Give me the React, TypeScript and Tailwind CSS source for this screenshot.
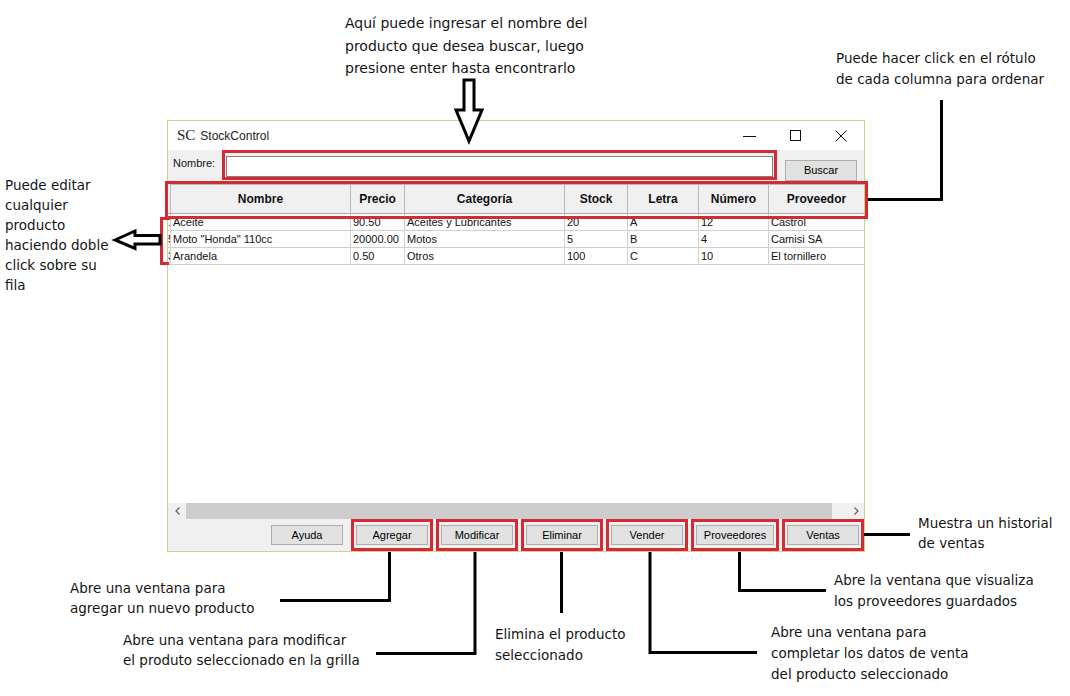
import React from "react";

const rows = [
  { id: "1", nombre: "Aceite", precio: "90.50", cat: "Aceites y Lubricantes", stock: "20", letra: "A", num: "12", prov: "Castrol" },
  { id: "5", nombre: 'Moto "Honda" 110cc', precio: "20000.00", cat: "Motos", stock: "5", letra: "B", num: "4", prov: "Camisi SA" },
  { id: "3", nombre: "Arandela", precio: "0.50", cat: "Otros", stock: "100", letra: "C", num: "10", prov: "El tornillero" },
];

const cols = [
  { key: "nombre", label: "Nombre", w: "w-[180px]" },
  { key: "precio", label: "Precio", w: "w-[54px]" },
  { key: "cat", label: "Categoría", w: "w-[160px]" },
  { key: "stock", label: "Stock", w: "w-[63px]" },
  { key: "letra", label: "Letra", w: "w-[71px]" },
  { key: "num", label: "Número", w: "w-[70px]" },
  { key: "prov", label: "Proveedor", w: "flex-1" },
] as const;

function WinButton({ children, w = "w-[72px]" }: { children: React.ReactNode; w?: string }) {
  return (
    <button className={`${w} h-[20px] bg-[#e1e1e1] border border-[#adadad] text-[11px] leading-none text-black`}>
      {children}
    </button>
  );
}

function Red({ children }: { children: React.ReactNode }) {
  return <div className="border-[3px] border-[#d42a33] px-[2px] py-[3px] flex">{children}</div>;
}

const note = "absolute whitespace-nowrap text-[13.5px] text-[#151515] font-['DejaVu_Sans',sans-serif]";

export default function App() {
  return (
    <div className="relative w-[1070px] h-[696px] bg-white overflow-hidden font-['Liberation_Sans',Arial,sans-serif]">
      <div className="pt-[120px] pl-[167px]">
        {/* ventana */}
        <div className="w-[698px] h-[432px] border border-[#d8cc8f] bg-white flex flex-col">
          {/* titulo */}
          <div className="h-[29px] flex items-center">
            <span className="ml-[9px] text-[15px] font-['Liberation_Serif',serif] text-[#222]">SC</span>
            <span className="ml-[5px] text-[12px] text-[#222]">StockControl</span>
            <div className="ml-auto flex h-full">
              <div className="w-[46px] flex items-center justify-center">
                <svg width="13" height="12" viewBox="0 0 13 12">
                  <path d="M0 6.5H13" stroke="#111" strokeWidth="1" />
                </svg>
              </div>
              <div className="w-[46px] flex items-center justify-center">
                <svg width="11" height="11" viewBox="0 0 11 11">
                  <rect x="0.5" y="0.5" width="10" height="10" fill="none" stroke="#111" strokeWidth="1" />
                </svg>
              </div>
              <div className="w-[46px] flex items-center justify-center">
                <svg width="12" height="12" viewBox="0 0 12 12">
                  <path d="M0.5 0.5L11.5 11.5M11.5 0.5L0.5 11.5" stroke="#111" strokeWidth="1" />
                </svg>
              </div>
            </div>
          </div>

          {/* busqueda */}
          <div className="h-[34px] bg-[#f0f0f0] flex items-start">
            <span className="w-[49px] ml-[5px] mt-[6px] text-[11px] leading-[14px] text-[#111]">Nombre:</span>
            <div className="border-[3px] border-[#d42a33] pl-[1px] pr-[1px] pt-[3px] flex">
              <input className="w-[547px] h-[21px] border border-[#7f7f7f] bg-white outline-none text-[11px] px-1" />
            </div>
            <div className="ml-[8px] mt-[7px]">
              <button className="w-[72px] h-[21px] bg-[#e1e1e1] border border-[#adadad] text-[11px] leading-none text-black">
                Buscar
              </button>
            </div>
          </div>

          {/* cabecera */}
          <div className="h-[30px] flex bg-[#f0f0f0] border-b border-[#a9a9a9]">
            <div className="w-[3px] border-r border-[#b9b9b9]" />
            {cols.map((c) => (
              <div
                key={c.key}
                className={`${c.w} flex items-center justify-center border-r border-t border-[#b9b9b9] last:border-r-0 bg-[#f0f0f0] text-[12px] font-bold text-[#111]`}
              >
                {c.label}
              </div>
            ))}
          </div>

          {/* filas */}
          <div className="flex-1 bg-white">
            {rows.map((r) => (
              <div key={r.id} className="h-[17px] flex border-b border-[#d0d0d0] text-[11px] leading-[16px] text-[#111]">
                <div className="w-[3px] overflow-hidden border-r border-[#d0d0d0]">{r.id}</div>
                {cols.map((c) => (
                  <div key={c.key} className={`${c.w} pl-[2px] overflow-hidden whitespace-nowrap border-r border-[#d0d0d0] last:border-r-0`}>
                    {r[c.key]}
                  </div>
                ))}
              </div>
            ))}
          </div>

          {/* scroll horizontal */}
          <div className="h-[16px] flex bg-[#f0f0f0]">
            <div className="w-[18px] flex items-center justify-center">
              <svg width="5" height="8" viewBox="0 0 5 8">
                <path d="M4.5 0.5L1 4L4.5 7.5" fill="none" stroke="#606060" strokeWidth="1.2" />
              </svg>
            </div>
            <div className="w-[646px] bg-[#cdcdcd]" />
            <div className="flex-1" />
            <div className="w-[16px] flex items-center justify-center">
              <svg width="5" height="8" viewBox="0 0 5 8">
                <path d="M0.5 0.5L4 4L0.5 7.5" fill="none" stroke="#606060" strokeWidth="1.2" />
              </svg>
            </div>
          </div>

          {/* botones */}
          <div className="h-[32px] bg-[#f0f0f0] flex items-center justify-end gap-[3px]">
            <div className="mr-[5px] flex">
              <WinButton>Ayuda</WinButton>
            </div>
            <Red><WinButton>Agregar</WinButton></Red>
            <Red><WinButton>Modificar</WinButton></Red>
            <Red><WinButton>Eliminar</WinButton></Red>
            <Red><WinButton>Vender</WinButton></Red>
            <Red><WinButton w="w-[78px]">Proveedores</WinButton></Red>
            <Red><WinButton>Ventas</WinButton></Red>
          </div>
        </div>
      </div>

      {/* recuadros rojos */}
      <div className="absolute left-[165px] top-[181px] w-[703px] h-[38px] border-[3px] border-[#d42a33]" />
      <div className="absolute left-[160px] top-[217px] w-[9px] h-[48px] border-[3px] border-r-0 border-[#d42a33]" />

      {/* lineas y flechas */}
      <svg className="absolute left-0 top-0 pointer-events-none" width="1070" height="696" viewBox="0 0 1070 696">
        <g fill="none" stroke="#000" strokeWidth="3">
          <polyline points="868,199.5 941.5,199.5 941.5,100" />
          <polyline points="389.5,552 389.5,600.5 280,600.5" />
          <polyline points="475,552 475,653.5 376,653.5" />
          <polyline points="561.5,552 561.5,613" />
          <polyline points="650,552 650,652.5 757,652.5" />
          <polyline points="739.5,552 739.5,590.5 826,590.5" />
          <polyline points="864,534.5 910,534.5" />
        </g>
        <polygon
          points="464,80 474,80 474,110 482,110 469,141 456,110 464,110"
          fill="#fff"
          stroke="#000"
          strokeWidth="3"
          strokeLinejoin="miter"
        />
        <polygon
          points="115,240 135,231 135,235.5 160,235.5 160,244 135,244 135,248.5"
          fill="#fff"
          stroke="#000"
          strokeWidth="3"
        />
      </svg>

      {/* notas */}
      <div className={`${note} left-[345px] top-[12px] text-[14px] leading-[22.5px]`}>
        Aquí puede ingresar el nombre del
        <br />
        producto que desea buscar, luego
        <br />
        presione enter hasta encontrarlo
      </div>
      <div className={`${note} left-[836px] top-[48px] leading-[21px]`}>
        Puede hacer click en el rótulo
        <br />
        de cada columna para ordenar
      </div>
      <div className={`${note} left-[5px] top-[175px] leading-[20px]`}>
        Puede editar
        <br />
        cualquier
        <br />
        producto
        <br />
        haciendo doble
        <br />
        click sobre su
        <br />
        fila
      </div>
      <div className={`${note} left-[70px] top-[579px] leading-[19.5px]`}>
        Abre una ventana para
        <br />
        agregar un nuevo producto
      </div>
      <div className={`${note} left-[123px] top-[630px] leading-[20px]`}>
        Abre una ventana para modificar
        <br />
        el produto seleccionado en la grilla
      </div>
      <div className={`${note} left-[495px] top-[624px] leading-[21px]`}>
        Elimina el producto
        <br />
        seleccionado
      </div>
      <div className={`${note} left-[771px] top-[622px] leading-[21px]`}>
        Abre una ventana para
        <br />
        completar los datos de venta
        <br />
        del producto seleccionado
      </div>
      <div className={`${note} left-[834px] top-[570px] leading-[21px]`}>
        Abre la ventana que visualiza
        <br />
        los proveedores guardados
      </div>
      <div className={`${note} left-[918px] top-[513px] leading-[20px]`}>
        Muestra un historial
        <br />
        de ventas
      </div>
    </div>
  );
}
